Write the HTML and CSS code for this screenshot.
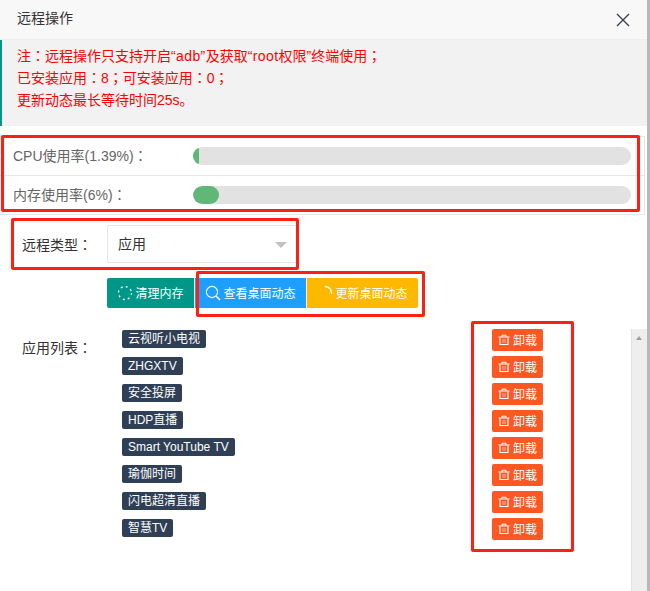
FILE: index.html
```
<!DOCTYPE html>
<html lang="zh-CN">
<head>
<meta charset="utf-8">
<title>远程操作</title>
<link rel="stylesheet" href="styles.css">
</head>
<body>
<div class="page">
  <div class="dialog">
    <header class="title-bar">
      <span class="title">远程操作</span>
      <svg class="close" width="14" height="14" viewBox="0 0 14 14"><path d="M1 1L13 13M13 1L1 13" stroke="#3c4048" stroke-width="1.4" fill="none"/></svg>
    </header>
    <div class="note">
      <p>注<span class="pn" lang="zh-TW">：</span>远程操作只支持开启<span class="latin">“adb”</span>及获取<span class="latin">“root</span>权限”终端使用<span class="pn" lang="zh-TW">；</span></p>
      <p>已安装应用<span class="pn" lang="zh-TW">：</span>8<span class="pn" lang="zh-TW">；</span>可安装应用<span class="pn" lang="zh-TW">：</span>0<span class="pn" lang="zh-TW">；</span></p>
      <p>更新动态最长等待时间25s。</p>
    </div>
    <div class="usage">
      <div class="usage-row">
        <span class="usage-label">CPU使用率(1.39%)<span class="pn" lang="zh-TW">：</span></span>
        <div class="bar"><div class="bar-fill" style="width:6px"></div></div>
      </div>
      <div class="usage-row">
        <span class="usage-label">内存使用率(6%)<span class="pn" lang="zh-TW">：</span></span>
        <div class="bar"><div class="bar-fill" style="width:26px"></div></div>
      </div>
    </div>
    <div class="type-row">
      <span class="form-label">远程类型<span class="pn" lang="zh-TW">：</span></span>
      <div class="select"><span class="select-text">应用</span><i class="caret"></i></div>
    </div>
    <div class="btn-row">
      <button class="btn btn-teal">
        <svg width="16" height="16" viewBox="0 0 16 16"><circle cx="8" cy="8" r="6.5" fill="none" stroke="#fff" stroke-width="1.3" stroke-dasharray="2 3.1"/></svg><span class="btn-text">清理内存</span>
      </button>
      <button class="btn btn-blue">
        <svg width="16" height="16" viewBox="0 0 16 16"><circle cx="7" cy="7" r="5.6" fill="none" stroke="#fff" stroke-width="1.1"/><path d="M11 11L15 15" stroke="#fff" stroke-width="1.6"/></svg><span class="btn-text">查看桌面动态</span>
      </button>
      <button class="btn btn-gold">
        <svg width="16" height="16" viewBox="0 0 16 16"><path d="M8 1.5A6.5 6.5 0 0 1 14.5 9" fill="none" stroke="#fff" stroke-width="1.3"/></svg><span class="btn-text">更新桌面动态</span>
      </button>
    </div>
    <div class="list-area">
      <span class="form-label list-label">应用列表<span class="pn" lang="zh-TW">：</span></span>
      <div class="apps">
        <div class="app-row"><span class="tag">云视听小电视</span><button class="del"><svg width="12" height="12" viewBox="0 0 12 12"><use href="#trash"/></svg><span class="del-text">卸载</span></button></div>
        <div class="app-row"><span class="tag">ZHGXTV</span><button class="del"><svg width="12" height="12" viewBox="0 0 12 12"><use href="#trash"/></svg><span class="del-text">卸载</span></button></div>
        <div class="app-row"><span class="tag">安全投屏</span><button class="del"><svg width="12" height="12" viewBox="0 0 12 12"><use href="#trash"/></svg><span class="del-text">卸载</span></button></div>
        <div class="app-row"><span class="tag">HDP直播</span><button class="del"><svg width="12" height="12" viewBox="0 0 12 12"><use href="#trash"/></svg><span class="del-text">卸载</span></button></div>
        <div class="app-row"><span class="tag">Smart YouTube TV</span><button class="del"><svg width="12" height="12" viewBox="0 0 12 12"><use href="#trash"/></svg><span class="del-text">卸载</span></button></div>
        <div class="app-row"><span class="tag">瑜伽时间</span><button class="del"><svg width="12" height="12" viewBox="0 0 12 12"><use href="#trash"/></svg><span class="del-text">卸载</span></button></div>
        <div class="app-row"><span class="tag">闪电超清直播</span><button class="del"><svg width="12" height="12" viewBox="0 0 12 12"><use href="#trash"/></svg><span class="del-text">卸载</span></button></div>
        <div class="app-row"><span class="tag">智慧TV</span><button class="del"><svg width="12" height="12" viewBox="0 0 12 12"><use href="#trash"/></svg><span class="del-text">卸载</span></button></div>
      </div>
      <div class="scrollbar"><i class="scroll-up"></i></div>
    </div>
    <div class="mark mark-usage"></div>
    <div class="mark mark-type"></div>
    <div class="mark mark-btns"></div>
    <div class="mark mark-del"></div>
  </div>
  <div class="edge"></div>
</div>
<svg width="0" height="0" class="defs"><defs><g id="trash" fill="none" stroke="#fff"><path d="M0.5 3H11.5M4 3V1.2H8V3" stroke-width="1"/><path d="M2 3.5V10.5H10V3.5" stroke-width="1.2"/><path d="M5 5V9M7 5V9" stroke-width=".8" opacity=".7"/></g></defs></svg>
</body>
</html>
```
FILE: styles.css
```
* { box-sizing: border-box; }
html, body { margin: 0; padding: 0; height: 591px; overflow: hidden; background: #fff; }
body { font-family: "Liberation Sans", "Noto Sans CJK SC", sans-serif; font-size: 14px; color: #333; }
.defs { position: absolute; }
.pn { font-family: "Noto Sans CJK TC", sans-serif; line-height: 1; }
.latin { letter-spacing: .4px; }
.page { display: flex; height: 591px; }
.dialog { position: relative; width: 647px; height: 591px; overflow: hidden; }
.edge { width: 3px; background: #b8b8b8; }

.title-bar { height: 40px; display: flex; align-items: center; justify-content: space-between; padding: 0 17px; background: #f8f8f8; border-bottom: 1px solid #eee; }
.title { color: #333; padding-bottom: 5px; }

.note { height: 86px; padding: 5px 15px 0; border-left: 2px solid #009688; background: #f2f2f2; color: #ff0000; line-height: 22px; }
.note p { margin: 0; height: 22px; }

.usage { margin-top: 10px; width: 645px; border-top: 1px solid #e6e6e6; border-bottom: 1px solid #e6e6e6; border-right: 1px solid #e6e6e6; }
.usage-row { height: 38px; display: flex; align-items: flex-start; padding: 10px 0 0 13px; }
.usage-row + .usage-row { height: 39px; border-top: 1px solid #e6e6e6; }
.usage-label { width: 180px; height: 18px; line-height: 19px; color: #666; }
.bar { width: 438px; height: 18px; border-radius: 9px; background: #e2e2e2; overflow: hidden; }
.bar-fill { height: 18px; border-radius: 9px; background: #5fb878; }

.type-row { display: flex; align-items: center; margin-top: 10px; padding-left: 22px; height: 38px; }
.form-label { width: 85px; color: #333; }
.select { width: 190px; height: 38px; display: flex; align-items: center; justify-content: space-between; padding: 0 9px 0 10px; border: 1px solid #e6e6e6; border-radius: 2px; background: #fff; }
.select-text { padding-bottom: 2px; }
.caret { width: 0; height: 0; border-left: 6px solid transparent; border-right: 6px solid transparent; border-top: 6px solid #c2c2c2; margin-top: 1px; }

.btn-row { display: flex; gap: 1px; margin-top: 15px; padding-left: 107px; }
.btn { height: 30px; border: 0; padding: 0; margin: 0; display: flex; align-items: center; justify-content: center; gap: 2px; color: #fff; font: inherit; font-size: 12px; }
.btn-text { padding-bottom: 2px; }
.btn-teal { width: 87px; background: #009688; border-radius: 2px 0 0 2px; }
.btn-blue { width: 111px; background: #1e9fff; }
.btn-gold { width: 111px; background: #ffb800; border-radius: 0 2px 2px 0; }

.list-area { position: relative; display: flex; margin-top: 21px; padding-left: 22px; height: 262px; }
.list-label { line-height: 38px; height: 38px; }
.apps { width: 421px; margin-left: 15px; }
.app-row { height: 27px; display: flex; align-items: flex-start; justify-content: space-between; }
.tag { margin-top: 1px; height: 18px; line-height: 18px; padding: 0 6px; background: #2f4056; color: #fff; font-size: 12px; border-radius: 2px; white-space: nowrap; }
.del { width: 51px; height: 22px; border: 0; padding: 0; display: flex; align-items: center; justify-content: center; gap: 3px; background: #ff5722; color: #fff; font: inherit; font-size: 12px; border-radius: 2px; }
.del-text { padding-bottom: 2px; }
.scrollbar { position: absolute; top: 0; right: 0; width: 16px; height: 262px; background: #eee; border-left: 1px solid #e2e2e2; }
.scroll-up { position: absolute; top: 7px; left: 4px; width: 0; height: 0; border-left: 3.5px solid transparent; border-right: 3.5px solid transparent; border-bottom: 4px solid #a0a0a0; }

.mark { position: absolute; border: 3px solid #ff2015; border-radius: 2px; pointer-events: none; }
.mark-usage { left: 1px; top: 135px; width: 639px; height: 77px; }
.mark-type { left: 11px; top: 218px; width: 288px; height: 52px; }
.mark-btns { left: 196px; top: 271px; width: 229px; height: 46px; }
.mark-del { left: 471px; top: 321px; width: 103px; height: 231px; }
```
